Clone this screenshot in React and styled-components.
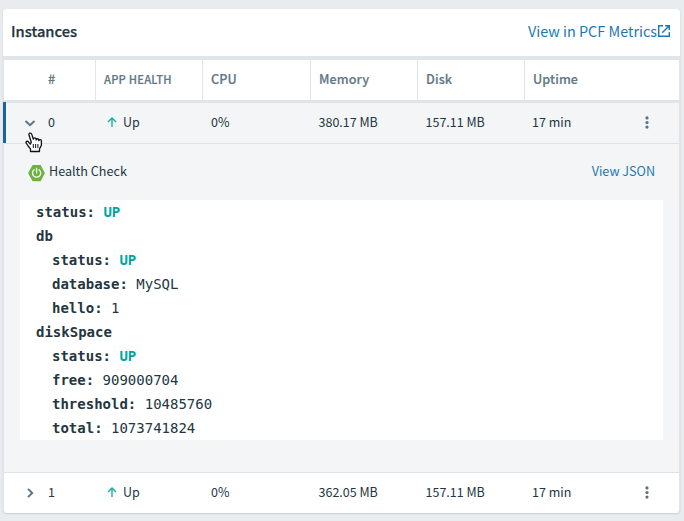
import React from "react";
import styled, { createGlobalStyle } from "styled-components";

const GlobalStyle = createGlobalStyle`
  * { box-sizing: border-box; }
  body {
    margin: 0;
    background: #e9ecef;
    color: #243640;
    font-family: "Noto Sans CJK SC", "Open Sans", sans-serif;
    font-size: 13px;
  }
`;

const Page = styled.main`
  position: relative;
  height: 521px;
  padding: 9px 4px 0 3px;
  overflow: hidden;
`;

const Panel = styled.section`
  border-radius: 4px;
  box-shadow: 0 1px 2px rgba(60, 80, 95, 0.2);
`;

const PanelHeader = styled.header`
  display: flex;
  align-items: center;
  justify-content: space-between;
  height: 47px;
  padding: 0 9px 4px 8px;
  background: #fff;
  border-radius: 4px 4px 0 0;
`;

const Title = styled.h2`
  margin: 0;
  font-size: 14.7px;
  font-weight: 500;
  line-height: 20px;
  -webkit-text-stroke: 0.25px currentColor;
`;

const Link = styled.a`
  display: flex;
  align-items: center;
  color: #1b78b3;
  font-size: ${(p) => (p.$large ? "14.4px" : "12.6px")};
  line-height: 20px;
  white-space: nowrap;
`;

const Table = styled.div`
  border: solid #dfe5e9;
  border-width: 4px 1px 0;
  border-radius: 0 0 4px 4px;
  background: #fff;
`;

const Row = styled.div`
  display: grid;
  grid-template-columns: 92px 107px 108px 107px 107px 1fr;
  height: 40px;
`;

const HeadRow = styled(Row)`
  height: 43px;
  border-bottom: 3px solid #dfe5e9;
`;

const BodyRow = styled(Row)`
  position: relative;
  background: ${(p) => (p.$open ? "#f3f5f7" : "transparent")};

  &::before {
    content: "";
    display: ${(p) => (p.$open ? "block" : "none")};
    position: absolute;
    left: -1px;
    top: -1px;
    bottom: 0;
    width: 3px;
    background: #1a6496;
  }
`;

const HeadCell = styled.div`
  display: flex;
  align-items: center;
  padding-left: ${(p) => (p.$first ? "44px" : "8px")};
  padding-bottom: 3px;
  border-right: 1px solid #dfe5e9;
  color: #627884;
  font-size: ${(p) => (p.$small ? "11.2px" : "12.6px")};
  font-weight: 500;
  letter-spacing: ${(p) => (p.$small ? "0.2px" : "0.1px")};
  -webkit-text-stroke: 0.2px currentColor;
  &:last-child { border-right: 0; }
`;

const Cell = styled.div`
  display: flex;
  align-items: center;
  padding-left: 7.5px;
  padding-bottom: 3px;
  font-size: 12.5px;
  white-space: nowrap;
`;

const CpuCell = styled(Cell)`
  padding-left: 8px;
`;

const ToggleCell = styled(Cell)`
  gap: 12px;
  padding-left: 20px;
`;

const HealthCell = styled(Cell)`
  gap: 5px;
  padding-left: 10px;
`;

const LastCell = styled(Cell)`
  justify-content: space-between;
  padding-left: 7px;
  padding-right: 24px;
`;

const Icon = styled.svg`
  display: block;
  flex: none;
  overflow: visible;
  margin-top: ${(p) => p.$drop || 0}px;
`;

const Details = styled.div`
  height: 330px;
  border: solid #dce4e9;
  border-width: 1px 0;
  padding: 17px 16px 0;
  background: #f3f5f7;
`;

const DetailsBar = styled.div`
  display: flex;
  justify-content: space-between;
  height: 39px;
  padding: 0 8px;
`;

const HealthTitle = styled.div`
  display: flex;
  align-items: center;
  gap: 4px;
  height: 18px;
  font-size: 12.6px;
`;

const DetailsLink = styled(Link)`
  height: 20px;
`;

const Json = styled.div`
  height: 240px;
  background: #fff;
  padding-left: 16px;
  font: 14px/24px "DejaVu Sans Mono", monospace;
`;

const JsonLine = styled.div`
  height: 24px;
  padding-left: ${(p) => p.$depth * 16}px;
  white-space: pre;
`;

const Key = styled.b`
  font-weight: 700;
`;

const Up = styled.b`
  color: #00a79d;
`;

const Pointer = styled.div`
  position: absolute;
  left: 25px;
  top: 132px;
`;

const External = () => (
  <Icon width="14" height="14" viewBox="0 0 14 14" fill="none" stroke="#1b78b3" strokeWidth="1.4">
    <path d="M6 1.7H1.7v10.6h10.6V8M8 1.7h4.3V6M12.3 1.7L5.2 8.8" />
  </Icon>
);

const Chevron = ({ open }) => (
  <Icon $drop={2} width="12" height="12" viewBox="0 0 12 12" fill="none" stroke="#5b717e" strokeWidth="1.9">
    <path d={open ? "M1.5 4L6 8.2L10.5 4" : "M4 1.8L8.2 6L4 10.2"} />
  </Icon>
);

const Arrow = () => (
  <Icon $drop={1} width="12" height="12" viewBox="0 0 12 12" fill="none" stroke="#1aada3" strokeWidth="1.4">
    <path d="M6 11V2M2 6L6 2l4 4" />
  </Icon>
);

const Dots = () => (
  <Icon $drop={1} width="16" height="16" viewBox="0 0 16 16" fill="#5b717e">
    <circle cx="8" cy="3.9" r="1.6" />
    <circle cx="8" cy="8.5" r="1.6" />
    <circle cx="8" cy="13.1" r="1.6" />
  </Icon>
);

const SpringLogo = () => (
  <Icon $drop={6} width="17" height="18" viewBox="0 0 17 18">
    <path
      d="M5 1.8h7.2L16 9.2l-3.8 7.2H5L1 9.2z"
      fill="#6cb33e"
      stroke="#6cb33e"
      strokeWidth="1.6"
      strokeLinejoin="round"
    />
    <path d="M8.6 4.5v4.4M6.1 5.8a4.1 4.1 0 1 0 5 0" fill="none" stroke="#fff" strokeWidth="1.3" strokeLinecap="round" />
  </Icon>
);

const HandIcon = () => (
  <Icon width="18" height="21" viewBox="0 0 18 21">
    <path
      d="M5.3 12.2L3.4 9.8C2.5 8.8.6 9.2 1 10.7L3.1 14l2.4 2.9V19.5h9v-2.6l1.9-3.7V9c0-1.7-2.4-1.7-2.6-.3V8c0-1.7-2.5-1.7-2.7 0V7.2c0-1.7-2.6-1.6-2.8 0L6.8 2.4C6.1.4 3.4 1 4 3l2.3 7.2z"
      fill="#fff"
      stroke="#111"
      strokeWidth="1.3"
      strokeLinejoin="round"
    />
    <path d="M8.3 12v4M10.6 12v4M12.9 12v4" fill="none" stroke="#111" strokeWidth="1" />
  </Icon>
);

const instances = [
  { id: 0, cpu: "0%", memory: "380.17 MB", disk: "157.11 MB", uptime: "17 min", open: true },
  { id: 1, cpu: "0%", memory: "362.05 MB", disk: "157.11 MB", uptime: "17 min", open: false },
];

const health = [
  { depth: 0, name: "status", value: "UP" },
  { depth: 0, name: "db" },
  { depth: 1, name: "status", value: "UP" },
  { depth: 1, name: "database", value: "MySQL" },
  { depth: 1, name: "hello", value: "1" },
  { depth: 0, name: "diskSpace" },
  { depth: 1, name: "status", value: "UP" },
  { depth: 1, name: "free", value: "909000704" },
  { depth: 1, name: "threshold", value: "10485760" },
  { depth: 1, name: "total", value: "1073741824" },
];

const HealthDetails = () => (
  <Details>
    <DetailsBar>
      <HealthTitle>
        <SpringLogo />
        Health Check
      </HealthTitle>
      <DetailsLink>View JSON</DetailsLink>
    </DetailsBar>
    <Json>
      {health.map((h, i) => (
        <JsonLine key={i} $depth={h.depth}>
          <Key>{h.value ? `${h.name}: ` : h.name}</Key>
          {h.value === "UP" ? <Up>UP</Up> : h.value}
        </JsonLine>
      ))}
    </Json>
  </Details>
);

export default function App() {
  return (
    <Page>
      <GlobalStyle />
      <Panel>
        <PanelHeader>
          <Title>Instances</Title>
          <Link $large>
            View in PCF Metrics
            <External />
          </Link>
        </PanelHeader>
        <Table>
          <HeadRow>
            <HeadCell $first>#</HeadCell>
            <HeadCell $small>APP HEALTH</HeadCell>
            <HeadCell>CPU</HeadCell>
            <HeadCell>Memory</HeadCell>
            <HeadCell>Disk</HeadCell>
            <HeadCell>Uptime</HeadCell>
          </HeadRow>
          {instances.map((r) => (
            <React.Fragment key={r.id}>
              <BodyRow $open={r.open}>
                <ToggleCell>
                  <Chevron open={r.open} />
                  {r.id}
                </ToggleCell>
                <HealthCell>
                  <Arrow />
                  Up
                </HealthCell>
                <CpuCell>{r.cpu}</CpuCell>
                <Cell>{r.memory}</Cell>
                <Cell>{r.disk}</Cell>
                <LastCell>
                  {r.uptime}
                  <Dots />
                </LastCell>
              </BodyRow>
              {r.open && <HealthDetails />}
            </React.Fragment>
          ))}
        </Table>
      </Panel>
      <Pointer>
        <HandIcon />
      </Pointer>
    </Page>
  );
}
